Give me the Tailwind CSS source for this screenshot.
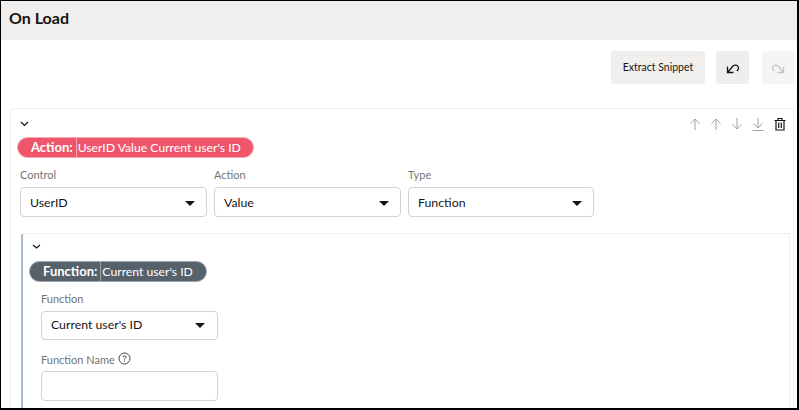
<!DOCTYPE html>
<html lang="en">
<head>
  <meta charset="UTF-8" />
  <title>On Load</title>
  <script src="https://cdn.jsdelivr.net/npm/@tailwindcss/browser@4"></script>
</head>
<body class="bg-white text-[#161513] font-['Lato',sans-serif]">
  <div class="w-[799px] h-[410px] overflow-hidden border-t border-l border-b-2 border-r-2 border-black flex flex-col">
    <!-- header -->
    <div class="h-[39px] shrink-0 bg-[#f1efed] pl-2 flex items-center pb-[6px]">
      <h1 class="text-[16px] font-bold">On Load</h1>
    </div>

    <!-- toolbar -->
    <div class="h-[68px] shrink-0 flex justify-end items-start pt-[11px] pr-[3px]">
      <button class="w-[94px] h-[33px] rounded-[3px] bg-[#f1efed] text-[10.5px] mr-[11px]">Extract Snippet</button>
      <button class="w-[33px] h-[33px] rounded-[3px] bg-[#efeeec] flex items-center justify-center mr-[13px]">
        <svg width="14" height="12" viewBox="0 0 14 12" fill="none" stroke="#161513" stroke-width="1.3"><path d="M1.500 4.500v6h6M1.500 10.500l5.500-6.500c2-1.500 4-1 5 .5s.5 3-1 4.500"/></svg>
      </button>
      <button class="w-[32px] h-[33px] rounded-[3px] bg-[#f6f5f4] flex items-center justify-center">
        <svg width="14" height="12" viewBox="0 0 14 12" fill="none" stroke="#c4c3c1" stroke-width="1.3"><path d="M12.500 4.500v6h-6M12.500 10.500l-5.500-6.500c-2-1.500-4-1-5 .5s-.5 3 1 4.500"/></svg>
      </button>
    </div>

    <!-- action card -->
    <div class="ml-[9px] mr-[3px] flex-1 border border-[#f1f0ee] rounded-t-[4px] border-b-0 min-h-0">
      <div class="flex justify-between h-[28px] pl-[9px] pr-[6px] pt-[8px]">
        <svg width="9" height="14" viewBox="0 0 9 14" fill="none" stroke="#161513" stroke-width="1.2"><path d="M1 5l3.500 3.500L8 5"/></svg>
        <div class="flex items-start gap-[7px]">
          <svg width="14" height="14" viewBox="0 0 14 14" fill="none" stroke="#a3a2a0"><path d="M7 13V2M2.500 6.500L7 2l4.500 4.500"/></svg>
          <svg width="14" height="14" viewBox="0 0 14 14" fill="none" stroke="#a3a2a0"><path d="M7 13V2M2.500 6.500L7 2l4.500 4.500"/></svg>
          <svg width="14" height="14" viewBox="0 0 14 14" fill="none" stroke="#a3a2a0"><path d="M7 1v11M2.500 7.500L7 12l4.500-4.500"/></svg>
          <svg width="14" height="14" viewBox="0 0 14 14" fill="none" stroke="#a3a2a0"><path d="M7 1v10M2.500 6.500L7 11l4.500-4.500M1.500 13.500h11"/></svg>
          <svg class="ml-[1px]" width="14" height="14" viewBox="0 0 14 14" fill="none" stroke="#161513" stroke-width="1.200"><path d="M1.500 3.500h11M5 3.500V1.500h4v2M3 3.500v9.500h8V3.500M5.700 5.500v5.500M8.300 5.500v5.500"/></svg>
        </div>
      </div>

      <div class="ml-[6px] w-[237px] h-[21px] rounded-full bg-[#f0566b] border border-[#f9a9b4] text-white text-[12.2px] flex items-center leading-none">
        <span class="font-bold text-[13px] pl-[13px] pr-[3px] h-full flex items-center border-r border-[#f9a9b4]">Action:</span>
        <span class="pt-[1px] pl-[1px]">UserID Value Current user's ID</span>
      </div>

      <div class="flex ml-[9px] mt-[10px] gap-[7px]">
        <div class="w-[187px]">
          <div class="text-[11px] leading-[14px] text-[#757472] h-[19px]">Control</div>
          <div class="h-[30px] border border-[#d4d3d1] rounded-[4px] flex items-center justify-between pt-[2px] pl-[9px] pr-[11px] text-[12.3px]">UserID<span class="w-0 h-0 border-x-[5px] border-x-transparent border-t-[5px] border-t-[#161513]"></span></div>
        </div>
        <div class="w-[187px]">
          <div class="text-[11px] leading-[14px] text-[#757472] h-[19px]">Action</div>
          <div class="h-[30px] border border-[#d4d3d1] rounded-[4px] flex items-center justify-between pt-[2px] pl-[9px] pr-[11px] text-[12.3px]">Value<span class="w-0 h-0 border-x-[5px] border-x-transparent border-t-[5px] border-t-[#161513]"></span></div>
        </div>
        <div class="w-[186px]">
          <div class="text-[11px] leading-[14px] text-[#757472] h-[19px]">Type</div>
          <div class="h-[30px] border border-[#d4d3d1] rounded-[4px] flex items-center justify-between pt-[2px] pl-[9px] pr-[11px] text-[12.3px]">Function<span class="w-0 h-0 border-x-[5px] border-x-transparent border-t-[5px] border-t-[#161513]"></span></div>
        </div>
      </div>

      <!-- function card -->
      <div class="ml-[10px] mr-[3px] mt-[16px] h-[200px] border border-[#f1f0ee] border-l-2 border-l-[#a9bccf] rounded-tl-[3px]">
        <div class="h-[27px] pl-[9px] pt-[6px]">
          <svg width="9" height="12" viewBox="0 0 9 12" fill="none" stroke="#161513" stroke-width="1.200"><path d="M1 5l3.500 3L8 5"/></svg>
        </div>
        <div class="ml-[6px] w-[178px] h-[21px] rounded-full bg-[#56616c] border border-[#9aa3ab] text-white text-[12.2px] flex items-center leading-none">
          <span class="font-bold text-[13px] pl-[13px] pr-[3px] h-full flex items-center border-r border-[#9aa3ab]">Function:</span>
          <span class="pt-[1px] pl-[1px]">Current user's ID</span>
        </div>
        <div class="ml-[18px] w-[177px] mt-[10px]">
          <div class="text-[11px] leading-[14px] text-[#757472] h-[19px]">Function</div>
          <div class="h-[29px] border border-[#d4d3d1] rounded-[4px] flex items-center justify-between pl-[9px] pr-[12px] text-[12.3px]">Current user's ID<span class="w-0 h-0 border-x-[5px] border-x-transparent border-t-[5px] border-t-[#161513]"></span></div>
          <div class="text-[11px] leading-[14px] text-[#757472] h-[18px] mt-[13px] flex items-start gap-[3px]">Function Name
            <svg class="-mt-[1px]" width="13" height="13" viewBox="0 0 13 13" fill="none" stroke="#403f3d"><circle cx="6.500" cy="6.500" r="5.500"/><path d="M5 5.300c0-2 3-2 3-.2 0 1-1.500 1.200-1.500 2.400M6.500 8.500v1"/></svg>
          </div>
          <div class="h-[30px] border border-[#d4d3d1] rounded-[4px]"></div>
        </div>
      </div>
    </div>
  </div>
</body>
</html>
